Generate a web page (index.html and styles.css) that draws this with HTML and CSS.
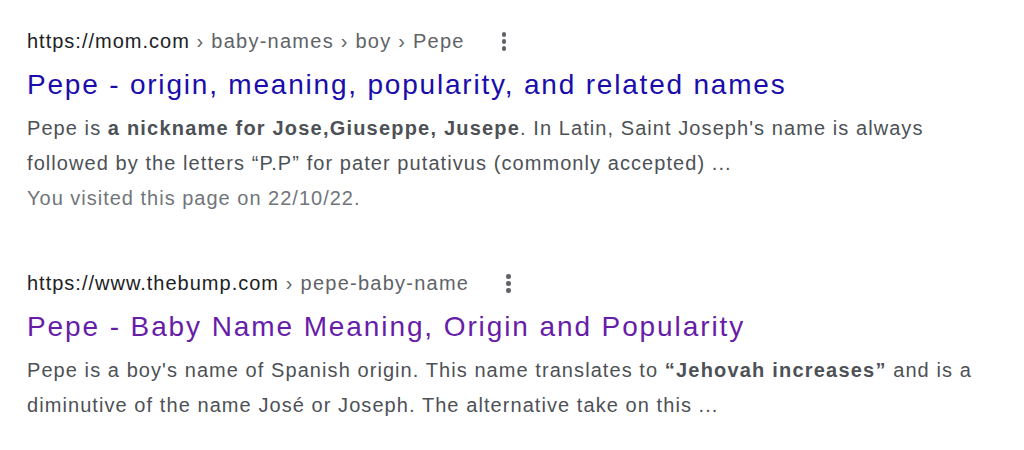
FILE: index.html
```html
<!DOCTYPE html>
<html>
<head>
<meta charset="utf-8">
<link rel="stylesheet" href="styles.css">
</head>
<body>
<div class="results">
  <div class="result">
    <div class="url-row">
      <span class="url"><span class="domain">https://mom.com</span><span class="crumbs"> › baby-names › boy › Pepe</span></span>
      <span class="more"><i></i><i></i><i></i></span>
    </div>
    <a class="title">Pepe - origin, meaning, popularity, and related names</a>
    <div class="snippet">Pepe is <b>a nickname for Jose,Giuseppe, Jusepe</b>. In Latin, Saint Joseph's name is always followed by the letters “P.P” for pater putativus (commonly accepted) ...</div>
    <div class="visited">You visited this page on 22/10/22.</div>
  </div>
  <div class="result">
    <div class="url-row">
      <span class="url"><span class="domain">https://www.thebump.com</span><span class="crumbs"> › pepe-baby-name</span></span>
      <span class="more"><i></i><i></i><i></i></span>
    </div>
    <a class="title seen">Pepe - Baby Name Meaning, Origin and Popularity</a>
    <div class="snippet">Pepe is a boy's name of Spanish origin. This name translates to <b>“Jehovah increases”</b> and is a diminutive of the name José or Joseph. The alternative take on this ...</div>
  </div>
</div>
</body>
</html>
```
FILE: styles.css
```css
html, body {
  margin: 0;
  padding: 0;
  background: #ffffff;
}
body {
  font-family: "Liberation Sans", Arial, sans-serif;
}
.results {
  padding: 27px 0 0 27px;
  width: 960px;
  display: flex;
  flex-direction: column;
  gap: 53px;
}
.url-row {
  display: flex;
  align-items: center;
  gap: 37px;
  height: 28px;
  font-size: 20px;
  line-height: 28px;
}
.domain { color: #202124; letter-spacing: 1px; }
.crumbs { color: #5f6368; letter-spacing: 1.25px; }
.more {
  display: flex;
  flex-direction: column;
  gap: 2.5px;
  width: 6px;
  padding-top: 1px;
}
.more i {
  display: block;
  width: 4.5px;
  height: 4.5px;
  border-radius: 50%;
  background: #5f6368;
}
.title {
  display: block;
  margin-top: 12px;
  font-size: 28px;
  line-height: 36px;
  letter-spacing: 1.8px;
  color: #1a0dab;
}
.title.seen { color: #681da8; letter-spacing: 1.9px; }
.snippet {
  margin-top: 8px;
  font-size: 20px;
  line-height: 35px;
  letter-spacing: 1.07px;
  color: #4d5156;
}
.snippet b { color: #4d5156; letter-spacing: 1.2px; }
.visited {
  font-size: 20px;
  line-height: 35px;
  letter-spacing: 1px;
  color: #70757a;
}
```
